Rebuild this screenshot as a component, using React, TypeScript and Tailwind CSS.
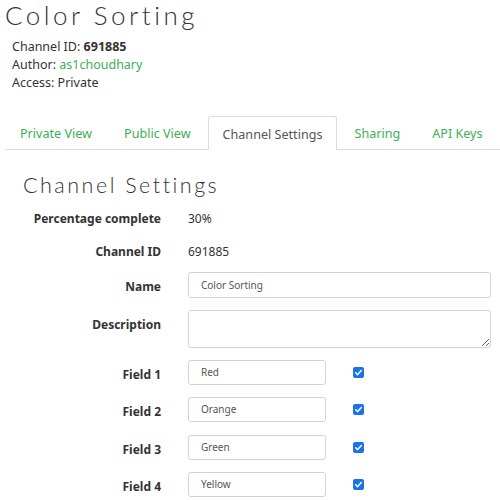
import React from "react";

const body = { fontFamily: '"Noto Sans", "Open Sans", sans-serif' };
const heading = { fontFamily: 'Lato, "Noto Sans", sans-serif' };

function Check() {
  return (
    <span className="flex h-[11px] w-[11px] items-center justify-center rounded-[2px] bg-[#1a73e8]">
      <svg viewBox="0 0 12 12" className="h-[9px] w-[9px]">
        <path d="M2.2 6.4 L4.8 8.8 L9.8 3.4" fill="none" stroke="#fff" strokeWidth="2" strokeLinecap="round" strokeLinejoin="round" />
      </svg>
    </span>
  );
}

function TextRow({ label, value, mb }: { label: string; value: string; mb: string }) {
  return (
    <div className={`flex h-[20px] items-center ${mb}`}>
      <div className="w-[156px] text-right text-[12px] font-bold text-[#333]">{label}</div>
      <div className="ml-[27px] text-[12px] text-[#333]">{value}</div>
    </div>
  );
}

function FieldRow({ label, value }: { label: string; value: string }) {
  return (
    <div className="mb-[12.4px] flex items-start">
      <div className="w-[156px] pt-[5px] text-right text-[12px] leading-[20px] font-bold text-[#333]">{label}</div>
      <div className="ml-[27px] flex h-[25px] w-[138px] items-center rounded-[3px] border border-[#d4d4d4] px-[12px] text-[10px] text-[#555]">
        {value}
      </div>
      <div className="ml-[27px] flex h-[25px] items-center">
        <Check />
      </div>
    </div>
  );
}

export default function App() {
  const tabs = [
    { name: "Private View", active: false },
    { name: "Public View", active: false },
    { name: "Channel Settings", active: true },
    { name: "Sharing", active: false },
    { name: "API Keys", active: false },
  ];
  return (
    <div className="h-[500px] w-[500px] overflow-hidden bg-white" style={body}>
      <div className="pl-[5px] pt-[2px]">
        <h1 className="whitespace-nowrap text-[26px] leading-[26px] font-light tracking-[3.5px] text-[#333]" style={heading}>
          Color Sorting
        </h1>
        <div className="mt-[10px] pl-[7px] text-[12.5px] leading-[18px] text-[#333]">
          <div>
            Channel ID: <span className="font-bold">691885</span>
          </div>
          <div>
            Author: <span className="text-[#3cb055]">as1choudhary</span>
          </div>
          <div>Access: Private</div>
        </div>

        <div className="mt-[24px] flex h-[34px] border-b border-[#ddd]">
          {tabs.map((t) => (
            <div
              key={t.name}
              className={
                t.active
                  ? "mr-[2px] -mb-px flex shrink-0 items-center whitespace-nowrap rounded-t-[3px] border border-b-0 border-[#ddd] bg-white px-[14px] pt-[4px] text-[12.6px] text-[#555]"
                  : "mr-[2px] flex shrink-0 items-center whitespace-nowrap px-[15px] pt-[4px] text-[12.6px] text-[#3cb055]"
              }
            >
              {t.name}
            </div>
          ))}
        </div>

        <h2 className="mt-[22px] ml-[18px] whitespace-nowrap text-[21.5px] leading-[26px] font-light tracking-[2.5px] text-[#333]" style={heading}>
          Channel Settings
        </h2>

        <div className="mt-[11px]">
          <TextRow label="Percentage complete" value="30%" mb="mb-[13px]" />
          <TextRow label="Channel ID" value="691885" mb="mb-[10px]" />

          <div className="mb-[12px] flex items-start">
            <div className="w-[156px] pt-[5px] text-right text-[12px] leading-[20px] font-bold text-[#333]">Name</div>
            <div className="ml-[27px] flex h-[26px] w-[303px] items-center rounded-[3px] border border-[#d4d4d4] px-[12px] text-[10px] text-[#555]">
              Color Sorting
            </div>
          </div>

          <div className="mb-[12px] flex items-start">
            <div className="w-[156px] pt-[5px] text-right text-[12px] leading-[20px] font-bold text-[#333]">Description</div>
            <textarea
              className="ml-[27px] block h-[38px] w-[303px] resize-y rounded-[3px] border border-[#d4d4d4] px-[12px] py-[4px] text-[10px] text-[#555] outline-none"
              defaultValue=""
            />
          </div>

          <FieldRow label="Field 1" value="Red" />
          <FieldRow label="Field 2" value="Orange" />
          <FieldRow label="Field 3" value="Green" />
          <FieldRow label="Field 4" value="Yellow" />
        </div>
      </div>
    </div>
  );
}
